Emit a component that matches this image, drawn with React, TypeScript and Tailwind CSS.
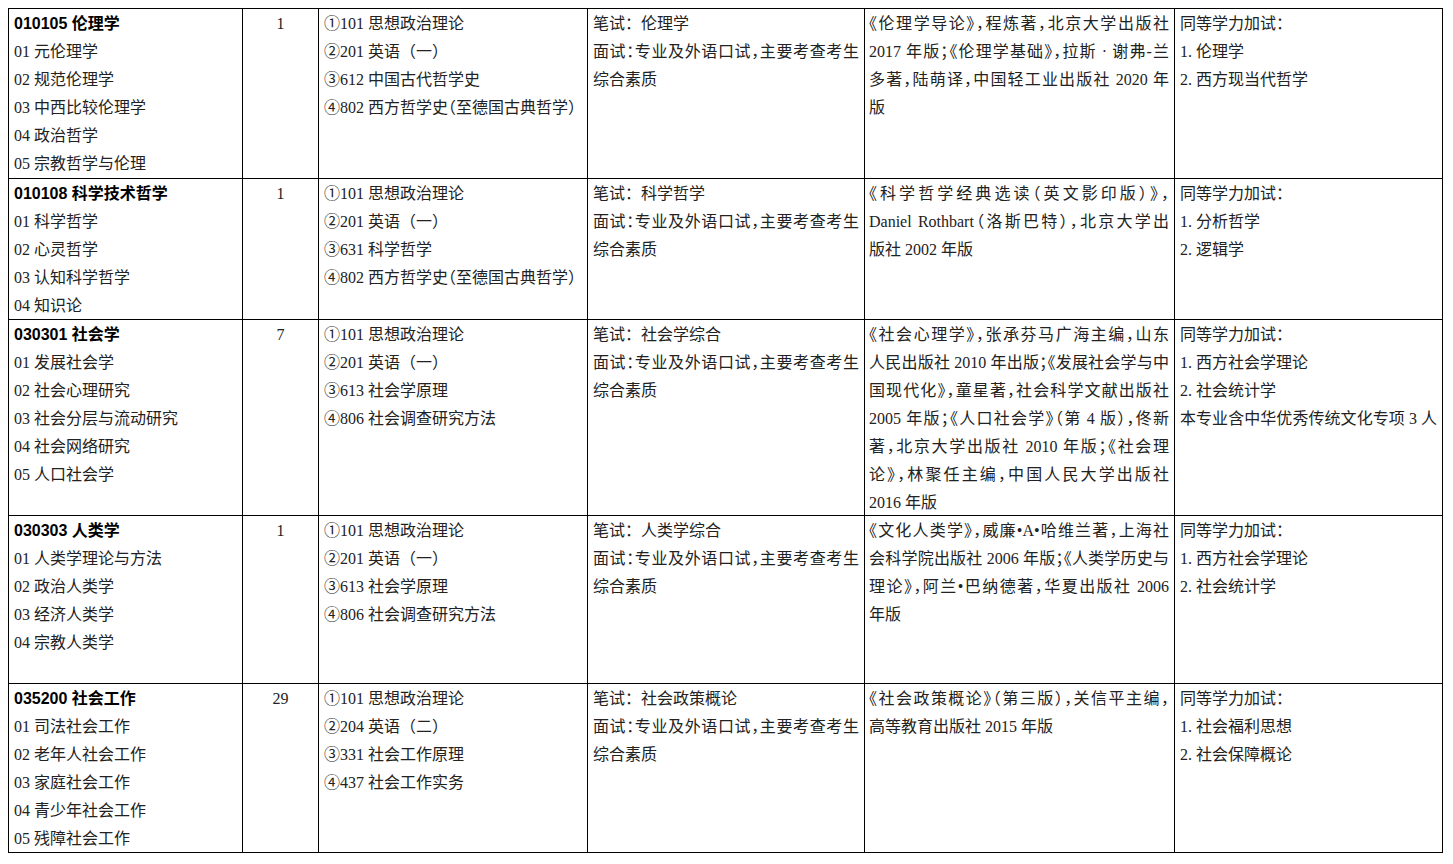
import React from "react";

type Line = string | { t: string; j?: boolean };

type Row = {
  h: string;
  head: string;
  subs: string[];
  n: string;
  exam: string[];
  test: string;
  books: Line[];
  extra: Line[];
};

const INTERVIEW = "面试：专业及外语口试，主要考查考生";

const rows: Row[] = [
  {
    h: "h-[170px]",
    head: "010105 伦理学",
    subs: ["01 元伦理学", "02 规范伦理学", "03 中西比较伦理学", "04 政治哲学", "05 宗教哲学与伦理"],
    n: "1",
    exam: ["①101 思想政治理论", "②201 英语（一）", "③612 中国古代哲学史", "④802 西方哲学史（至德国古典哲学）"],
    test: "笔试：伦理学",
    books: [
      { t: "《伦理学导论》，程炼著，北京大学出版社", j: true },
      { t: "2017 年版；《伦理学基础》，拉斯 · 谢弗-兰", j: true },
      { t: "多著，陆萌译，中国轻工业出版社 2020 年", j: true },
      "版",
    ],
    extra: ["同等学力加试：", "1. 伦理学", "2. 西方现当代哲学"],
  },
  {
    h: "h-[141px]",
    head: "010108 科学技术哲学",
    subs: ["01 科学哲学", "02 心灵哲学", "03 认知科学哲学", "04 知识论"],
    n: "1",
    exam: ["①101 思想政治理论", "②201 英语（一）", "③631 科学哲学", "④802 西方哲学史（至德国古典哲学）"],
    test: "笔试：科学哲学",
    books: [
      { t: "《科学哲学经典选读（英文影印版）》，", j: true },
      { t: "Daniel Rothbart（洛斯巴特），北京大学出", j: true },
      "版社 2002 年版",
    ],
    extra: ["同等学力加试：", "1. 分析哲学", "2. 逻辑学"],
  },
  {
    h: "h-[196px]",
    head: "030301 社会学",
    subs: ["01 发展社会学", "02 社会心理研究", "03 社会分层与流动研究", "04 社会网络研究", "05 人口社会学"],
    n: "7",
    exam: ["①101 思想政治理论", "②201 英语（一）", "③613 社会学原理", "④806 社会调查研究方法"],
    test: "笔试：社会学综合",
    books: [
      { t: "《社会心理学》，张承芬马广海主编，山东", j: true },
      { t: "人民出版社 2010 年出版；《发展社会学与中", j: true },
      { t: "国现代化》，童星著，社会科学文献出版社", j: true },
      { t: "2005 年版；《人口社会学》（第 4 版），佟新", j: true },
      { t: "著，北京大学出版社 2010 年版；《社会理", j: true },
      { t: "论》，林聚任主编，中国人民大学出版社", j: true },
      "2016 年版",
    ],
    extra: [
      "同等学力加试：",
      "1. 西方社会学理论",
      "2. 社会统计学",
      { t: "本专业含中华优秀传统文化专项 3 人", j: true },
    ],
  },
  {
    h: "h-[168px]",
    head: "030303 人类学",
    subs: ["01 人类学理论与方法", "02 政治人类学", "03 经济人类学", "04 宗教人类学"],
    n: "1",
    exam: ["①101 思想政治理论", "②201 英语（一）", "③613 社会学原理", "④806 社会调查研究方法"],
    test: "笔试：人类学综合",
    books: [
      { t: "《文化人类学》，威廉•A•哈维兰著，上海社", j: true },
      { t: "会科学院出版社 2006 年版；《人类学历史与", j: true },
      { t: "理论》，阿兰•巴纳德著，华夏出版社 2006", j: true },
      "年版",
    ],
    extra: ["同等学力加试：", "1. 西方社会学理论", "2. 社会统计学"],
  },
  {
    h: "h-[169px]",
    head: "035200 社会工作",
    subs: ["01 司法社会工作", "02 老年人社会工作", "03 家庭社会工作", "04 青少年社会工作", "05 残障社会工作"],
    n: "29",
    exam: ["①101 思想政治理论", "②204 英语（二）", "③331 社会工作原理", "④437 社会工作实务"],
    test: "笔试：社会政策概论",
    books: [
      { t: "《社会政策概论》（第三版），关信平主编，", j: true },
      "高等教育出版社 2015 年版",
    ],
    extra: ["同等学力加试：", "1. 社会福利思想", "2. 社会保障概论"],
  },
];

function L({ line }: { line: Line }) {
  const t = typeof line === "string" ? line : line.t;
  const j = typeof line !== "string" && line.j;
  return (
    <div
      className={
        j
          ? "whitespace-nowrap text-justify [text-align-last:justify] [font-feature-settings:'halt']"
          : "whitespace-nowrap"
      }
    >
      {t}
    </div>
  );
}

function Exam({ s }: { s: string }) {
  const idx = s.indexOf("（至");
  if (idx < 0) return <div className="whitespace-nowrap">{s}</div>;
  return (
    <div className="whitespace-nowrap">
      {s.slice(0, idx)}
      <span className="[font-feature-settings:'halt']">（</span>
      {s.slice(idx + 1)}
    </div>
  );
}

const cell = "border-r border-b border-black overflow-hidden pt-[1px]";

export default function App() {
  return (
    <div className="min-h-[864px] w-[1453px] bg-white pt-[8px] pl-[8px]">
      <div
        className="grid w-max grid-cols-[234px_76px_269px_277px_310px_268px] border-l border-t border-black text-[16px] leading-[28px] text-[#222]"
        style={{ fontFamily: '"Liberation Serif", "Noto Sans CJK SC", serif' }}
      >
        {rows.map((r, i) => (
          <React.Fragment key={i}>
            <div className={`${cell} ${r.h} pl-[5px]`}>
              <div
                className="whitespace-nowrap font-bold text-black"
                style={{ fontFamily: '"Liberation Sans", "Noto Sans CJK SC", sans-serif' }}
              >
                {r.head}
              </div>
              {r.subs.map((s, k) => (
                <L key={k} line={s} />
              ))}
            </div>
            <div className={`${cell} ${r.h} text-center`}>{r.n}</div>
            <div className={`${cell} ${r.h} pl-[5px]`}>
              {r.exam.map((s, k) => (
                <Exam key={k} s={s} />
              ))}
            </div>
            <div className={`${cell} ${r.h} pl-[5px] pr-[5px]`}>
              <L line={r.test} />
              <L line={{ t: INTERVIEW, j: true }} />
              <L line="综合素质" />
            </div>
            <div className={`${cell} ${r.h} pl-[4px] pr-[5px]`}>
              {r.books.map((b, k) => (
                <L key={k} line={b} />
              ))}
            </div>
            <div className={`${cell} ${r.h} pl-[5px] pr-[5px]`}>
              {r.extra.map((b, k) => (
                <L key={k} line={b} />
              ))}
            </div>
          </React.Fragment>
        ))}
      </div>
    </div>
  );
}
